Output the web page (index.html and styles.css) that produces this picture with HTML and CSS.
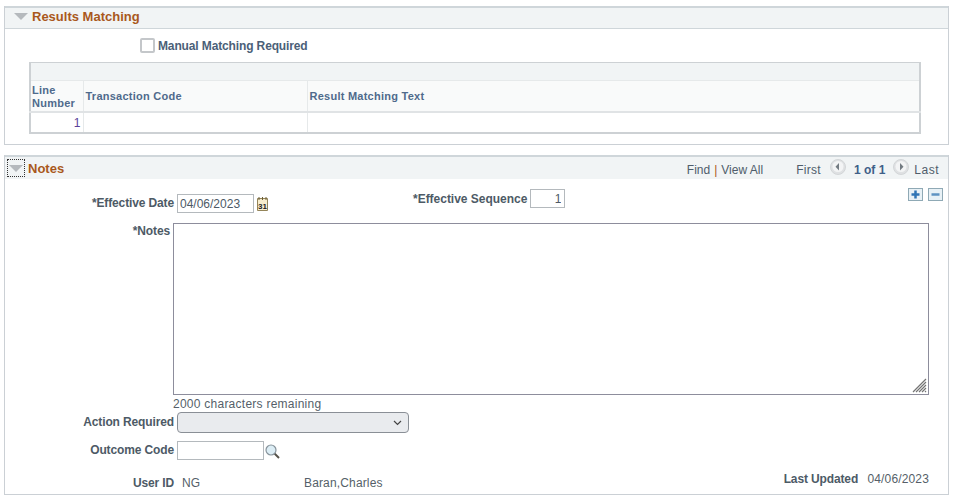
FILE: index.html
```html
<!DOCTYPE html>
<html lang="en">
<head>
    <meta charset="UTF-8">
    <title>Results Matching and Notes</title>
    <link rel="stylesheet" href="styles.css">
</head>
<body>
    <!-- Results Matching -->
    <section class="group results">
        <div class="group-head head-boxed">
            <svg class="arrow" width="14" height="7" viewBox="0 0 14 7"><path d="M0 0H14L7 7Z" fill="#b5b9bd"/></svg>
            <span class="group-title">Results Matching</span>
        </div>
        <div class="check-row">
            <span class="checkbox"></span>
            <span class="label">Manual Matching Required</span>
        </div>
        <table class="grid">
            <colgroup>
                <col class="col-line">
                <col class="col-code">
                <col>
            </colgroup>
            <tr class="grid-band"><td colspan="3"></td></tr>
            <tr class="grid-head">
                <th class="th-line">Line Number</th>
                <th>Transaction Code</th>
                <th>Result Matching Text</th>
            </tr>
            <tr class="grid-row">
                <td class="num">1</td>
                <td></td>
                <td></td>
            </tr>
        </table>
    </section>

    <!-- Notes -->
    <section class="group notes">
        <div class="group-head head-nav">
            <span class="arrow-focus">
                <svg class="arrow" width="14" height="7" viewBox="0 0 14 7"><path d="M0 0H14L7 7Z" fill="#b5b9bd"/></svg>
            </span>
            <span class="group-title">Notes</span>
            <div class="nav">
                <span>Find</span><span class="sep">|</span><span>View All</span>
                <span class="first">First</span>
                <svg class="nav-btn btn-prev" width="16" height="16" viewBox="0 0 16 16"><circle cx="8" cy="8" r="7.500" fill="#dfe1e3" stroke="#d3d6d8"/><circle cx="8" cy="7.500" r="5.500" fill="#f3f4f5"/><path d="M9 4V11.500L5.500 7.800Z" fill="#737b82"/></svg>
                <span class="count">1 of 1</span>
                <svg class="nav-btn btn-next" width="16" height="16" viewBox="0 0 16 16"><circle cx="8" cy="8" r="7.500" fill="#dfe1e3" stroke="#d3d6d8"/><circle cx="8" cy="7.500" r="5.500" fill="#f3f4f5"/><path d="M7 4V11.500L10.500 7.800Z" fill="#737b82"/></svg>
                <span class="last">Last</span>
            </div>
        </div>

        <div class="row-top">
            <div class="field date-field">
                <label class="label side">*Effective Date</label>
                <input class="input date" type="text" value="04/06/2023">
                <svg class="cal" width="13" height="16" viewBox="0 0 13 16">
                    <path d="M1.500 2.500H11.500V14.500H1.500Z" fill="#f7edcd" stroke="#94855a"/>
                    <path d="M3 1V4M6.500 1V4M10 1V4" stroke="#6b5f3a"/>
                    <text x="2" y="12.500" class="cal-text">31</text>
                </svg>
            </div>
            <div class="field seq-field">
                <label class="label seq-label">*Effective Sequence</label>
                <input class="input seq" type="text" value="1">
            </div>
            <div class="row-btns">
                <span class="sq-btn">
                    <svg width="15" height="13" viewBox="0 0 15 13"><path d="M7.500 2.500V10.500M3.500 6.500H11.500" stroke="#2f74b5" stroke-width="2.500"/></svg>
                </span>
                <span class="sq-btn">
                    <svg width="15" height="13" viewBox="0 0 15 13"><path d="M3.500 6.500H11.500" stroke="#5f93c2" stroke-width="2.500"/></svg>
                </span>
            </div>
        </div>

        <div class="row-notes">
            <label class="label side-notes">*Notes</label>
            <div class="notes-wrap">
                <textarea class="notes-box"></textarea>
                <svg class="grip" width="15" height="15" viewBox="0 0 15 15">
                    <path d="M1 14L14 1M4 14L14 4M7 14L14 7M10 14L14 10M13 14L14 13" stroke="#747474" stroke-width="1.200" fill="none"/>
                </svg>
            </div>
        </div>
        <div class="remaining">2000 characters remaining</div>

        <div class="field row-action">
            <label class="label side">Action Required</label>
            <select class="select"><option></option></select>
        </div>

        <div class="field row-outcome">
            <label class="label side">Outcome Code</label>
            <input class="input outcome" type="text">
            <svg class="lens" width="15" height="15" viewBox="0 0 15 15">
                <path d="M9.500 9.500L14 14" stroke="#55524a" stroke-width="2"/>
                <circle cx="6" cy="6" r="5" fill="#dcedf5" stroke="#87939b" stroke-width="1.200"/>
            </svg>
        </div>

        <div class="row-foot">
            <div class="foot-user">
                <label class="label side">User ID</label>
                <span class="value user-id">NG</span>
                <span class="value">Baran,Charles</span>
            </div>
            <div class="updated">
                <span class="label">Last Updated</span>
                <span class="value">04/06/2023</span>
            </div>
        </div>
    </section>
</body>
</html>
```

FILE: styles.css
```css
body {
    margin: 0;
    padding: 6px 7px 0 4px;
    background: #ffffff;
    font-family: "Liberation Sans", Arial, sans-serif;
    font-size: 12px;
    color: #4d5a66;
}

.group {
    border: 1px solid #cbd0d5;
    border-top: 0;
}

.group-head {
    display: flex;
    align-items: center;
    background: #f1f4f5;
    border-top: 2px solid #cfd6da;
}

.head-boxed {
    box-sizing: border-box;
    height: 23px;
    padding-bottom: 4px;
    border-bottom: 1px solid #cfd6da;
}

.head-boxed .arrow {
    margin: 0 4px 0 9px;
}

.head-nav {
    height: 22px;
}

.group-title {
    font-size: 13px;
    font-weight: bold;
    color: #a9581c;
}

.results {
    height: 138px;
}

.notes {
    margin-top: 10px;
    height: 339px;
}

.label {
    font-weight: bold;
    letter-spacing: -0.13px;
    color: #4d5a66;
}

.value {
    letter-spacing: 0.15px;
    color: #555f69;
}

.check-row {
    display: flex;
    align-items: center;
    margin: 9px 0 0 135px;
    height: 15px;
}

.checkbox {
    width: 11px;
    height: 11px;
    margin-right: 3px;
    border: 2px solid #c4c7ca;
    border-radius: 2px;
}

.check-row .label {
    color: #4b5f78;
}

/* grid */
.grid {
    width: 892px;
    margin: 9px 0 0 24px;
    border-collapse: collapse;
    border: 2px solid #cdd1d4;
    border-top-width: 1px;
    table-layout: fixed;
}

.col-line {
    width: 53px;
}

.col-code {
    width: 224px;
}

.grid-band td {
    height: 17px;
    padding: 0;
    background: #f1f4f5;
}

.grid-head th {
    height: 30px;
    padding: 0 2px;
    background: #f9fafa;
    border: 1px solid #e6e9ea;
    border-bottom: 2px solid #e0e3e5;
    text-align: left;
    font-size: 11px;
    font-weight: bold;
    letter-spacing: 0.25px;
    line-height: 13px;
    color: #4f6a8c;
}

.grid-head .th-line {
    height: 28px;
    padding: 2px 2px 0 1px;
}

.grid-row td {
    height: 19px;
    padding: 0 2px;
    border-right: 1px solid #e6e9ea;
}

.grid-row .num {
    text-align: right;
    color: #5b3f9a;
}

/* notes header */
.arrow-focus {
    display: flex;
    justify-content: center;
    align-items: center;
    width: 18px;
    height: 18px;
    margin: 0 3px 0 2px;
    border: 1px dotted #333;
    box-sizing: border-box;
}

.nav {
    display: flex;
    align-items: center;
    margin-left: auto;
    margin-right: 9px;
    padding-top: 4px;
    color: #4f5d6b;
}

.sep {
    margin: 0 4px;
    color: #a9581c;
}

.first {
    margin-left: 33px;
    letter-spacing: 0.3px;
}

.last {
    letter-spacing: 0.5px;
}

.nav-btn {
    margin-bottom: 6px;
}

.btn-prev {
    margin-left: 9px;
    margin-right: 8px;
}

.btn-next {
    margin-left: 8px;
    margin-right: 5px;
}

.count {
    font-weight: bold;
    color: #3f5f88;
}

.field {
    display: flex;
    align-items: center;
}

.side {
    width: 169px;
    margin-right: 3px;
    text-align: right;
    flex: none;
}

.field .side {
    margin-bottom: 2px;
}

.input {
    box-sizing: border-box;
    height: 19px;
    padding: 0 2px;
    border: 1px solid #b4b9bd;
    font: 12px "Liberation Sans", Arial, sans-serif;
    color: #4d5a66;
    background: #fff;
}

.row-top {
    display: flex;
    align-items: flex-start;
    height: 44px;
}

.date-field {
    margin-top: 15px;
    width: 408px;
}

.date {
    width: 77px;
}

.cal {
    margin-left: 2px;
}

.cal-text {
    font-size: 8px;
    font-weight: bold;
    fill: #222;
}

.seq-field {
    margin-top: 10px;
}

.seq-label {
    letter-spacing: -0.02px;
}

.seq {
    width: 35px;
    margin-left: 3px;
    padding-right: 3px;
    text-align: right;
}

.row-btns {
    display: flex;
    gap: 5px;
    margin: 9px 0 0 343px;
}

.sq-btn {
    display: block;
    box-sizing: border-box;
    width: 15px;
    height: 13px;
    background: #e8f1f6;
    outline: 1px solid #8fa9b5;
    outline-offset: -1px;
}

.sq-btn svg {
    display: block;
}

.row-notes {
    display: flex;
    align-items: flex-start;
}

.side-notes {
    width: 165px;
    margin-right: 3px;
    margin-top: 1px;
    text-align: right;
}

.notes-wrap {
    position: relative;
    width: 756px;
    height: 172px;
}

.notes-box {
    display: block;
    box-sizing: border-box;
    width: 756px;
    height: 172px;
    margin: 0;
    border: 1px solid #8d8d9c;
    background: #fff;
    resize: none;
}

.grip {
    position: absolute;
    right: 2px;
    bottom: 2px;
}

.remaining {
    margin: 2px 0 0 168px;
    height: 14px;
    line-height: 14px;
    letter-spacing: 0.25px;
    color: #555f69;
}

.row-action {
    margin-top: 1px;
}

.select {
    box-sizing: border-box;
    width: 232px;
    height: 21px;
    border: 1px solid #8a8f96;
    border-radius: 4px;
    background: #e9ebee url("data:image/svg+xml,%3Csvg xmlns='http://www.w3.org/2000/svg' width='9' height='6'%3E%3Cpath d='M1 1L4.500 4.500L8 1' fill='none' stroke='%23444' stroke-width='1.200'/%3E%3C/svg%3E") no-repeat right 6px center;
    appearance: none;
    font: 12px "Liberation Sans", Arial, sans-serif;
}

.row-outcome {
    margin-top: 8px;
}

.outcome {
    width: 87px;
}

.lens {
    margin: 2px 0 0 1px;
}

.row-foot {
    display: flex;
    align-items: flex-start;
    margin-top: 12px;
}

.foot-user {
    display: flex;
    margin-top: 4px;
}

.user-id {
    margin-left: 5px;
    width: 122px;
}

.updated {
    margin-left: auto;
    margin-right: 19px;
}

.updated .value {
    margin-left: 6px;
}
```
